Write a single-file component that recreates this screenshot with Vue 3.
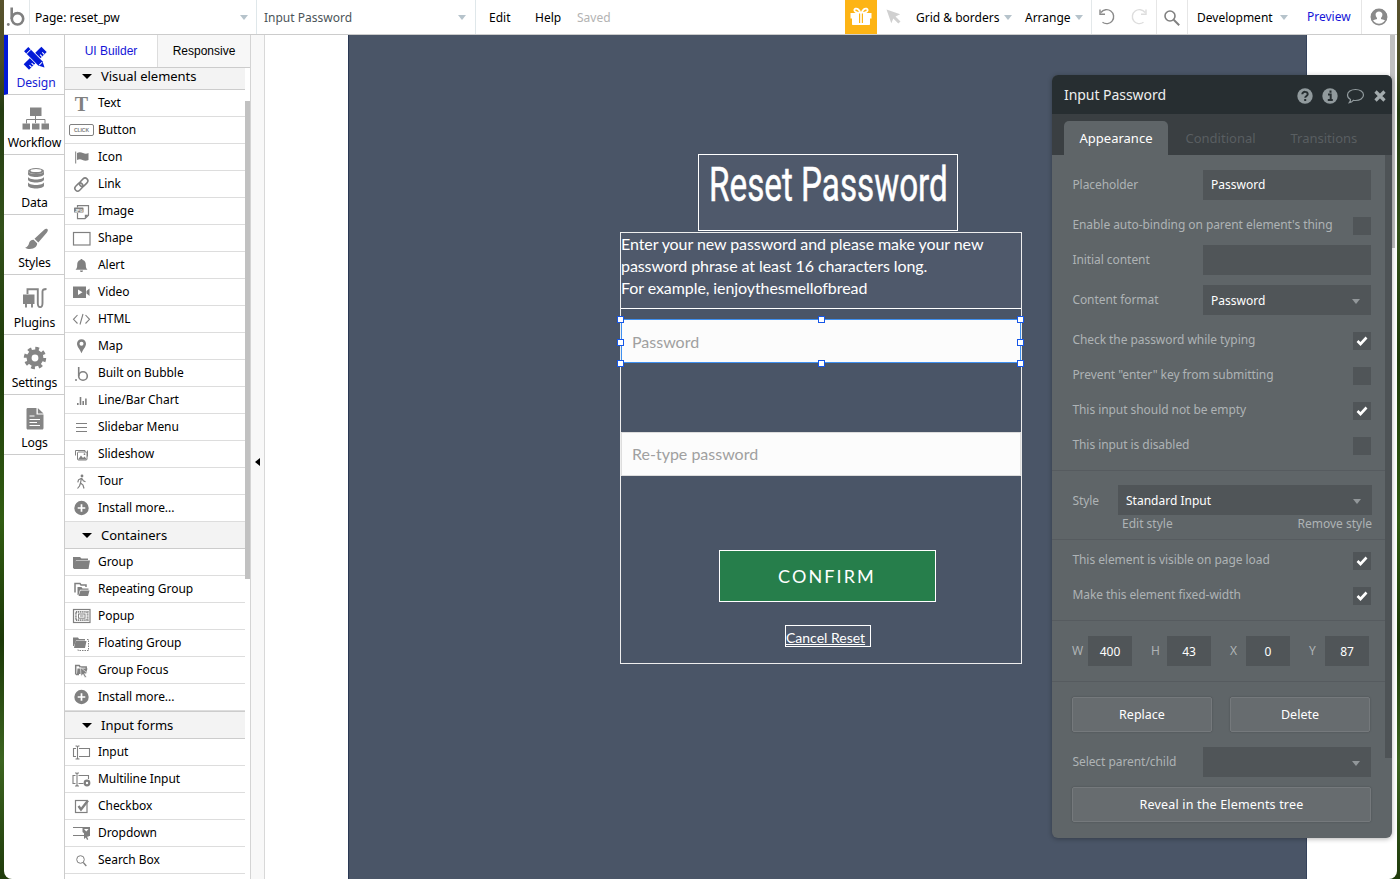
<script setup>
import { ref } from 'vue'

const navItems = [
    { label: 'Design', icon: 'design' },
    { label: 'Workflow', icon: 'workflow' },
    { label: 'Data', icon: 'data' },
    { label: 'Styles', icon: 'styles' },
    { label: 'Plugins', icon: 'plugins' },
    { label: 'Settings', icon: 'settings' },
    { label: 'Logs', icon: 'logs' }
]
const activeNav = ref('Design')

const navIcons = {
    design: '<g transform="rotate(45 15 15)"><path d="M11.500 2.500h7.500v25h-7.500z"/><path d="M19 6h-2.800M19 9h-2.800M19 21h-2.800M19 24h-2.800" stroke="#fff" stroke-width="1.100"/></g><g transform="rotate(-45 15 15)"><path d="M12 2.500h6v20L15 28.500l-3-6z" stroke="#fff" stroke-width="1.600"/><path d="M12 2.500h6v20L15 28.500l-3-6z"/><path d="M12 6h6M13 23h4" stroke="#fff" stroke-width="1"/></g>',
    workflow: '<path d="M10 3.500h11.500V12H10zM2.500 19.500h7.500v6H2.500zM12 19.500h7.500v6H12zM21.500 19.500H29v6h-7.500z"/><path d="M15.500 12v7M6.500 19.500v-4h18.500v4" fill="none" stroke="currentColor" stroke-width="1"/>',
    data: '<ellipse cx="16" cy="7" rx="8" ry="3"/><ellipse cx="16" cy="6.600" rx="5.500" ry="1.500" fill="#fff"/><path d="M8 7v3c0 4 16 4 16 0V7c0 4-16 4-16 0zM8 12.500v3c0 4 16 4 16 0v-3c0 4-16 4-16 0zM8 18v3.500c0 4 16 4 16 0V18c0 4-16 4-16 0z"/>',
    styles: '<path d="M27.500 5.300c-1-.9-2.300-.4-3.600.6l-9.400 8.900 3.800 3.800 8.400-9.800c1-1.200 1.600-2.700.8-3.500zM13.600 15.700c-2.300-.1-4 1.300-4.500 3.400-.4 1.900-1.400 4-4 4.600 2.600 1.900 8 1.700 10.500-.7 1.300-1.300 1.600-2.500 1.500-3.700z"/>',
    plugins: '<path d="M3 10.500h11.500v9.500H3z"/><path d="M6 20v3.500M12 20v3.500M7.500 10V5.200h10.300V19c0 5.500 4.700 5.500 4.700 0V7.500c0-1.700.8-2.500 4-2.500" fill="none" stroke="currentColor" stroke-width="1.900"/>',
    settings: '<circle cx="15" cy="14" r="5.900" fill="none" stroke="currentColor" stroke-width="5"/><circle cx="15" cy="14" r="9.500" fill="none" stroke="currentColor" stroke-width="3.400" stroke-dasharray="3.730 3.730"/>',
    logs: '<path d="M8 4h8.500v6.500h7V24c0 .8-.5 1.500-1.300 1.500H7.800c-.8 0-1.300-.7-1.300-1.500V5.300C6.500 4.500 7.200 4 8 4z"/><path d="M17.800 4l5.700 5.400h-5.700z"/><path d="M9.500 12h5M9.500 15.500H20M9.500 18.500H17M9.500 21.500H20" stroke="#fff" stroke-width="1.200"/>'
}

const sections = [
    {
        title: 'Visual elements',
        items: [
            ['Text', 'text'], ['Button', 'button'], ['Icon', 'flag'], ['Link', 'link'], ['Image', 'image'],
            ['Shape', 'shape'], ['Alert', 'bell'], ['Video', 'video'], ['HTML', 'html'], ['Map', 'map'],
            ['Built on Bubble', 'bubble'], ['Line/Bar Chart', 'chart'], ['Slidebar Menu', 'menu'],
            ['Slideshow', 'slideshow'], ['Tour', 'tour'], ['Install more...', 'plus']
        ]
    },
    {
        title: 'Containers',
        items: [
            ['Group', 'folder'], ['Repeating Group', 'folders'], ['Popup', 'popup'],
            ['Floating Group', 'floating'], ['Group Focus', 'focus'], ['Install more...', 'plus']
        ]
    },
    {
        title: 'Input forms',
        items: [
            ['Input', 'input'], ['Multiline Input', 'multiline'], ['Checkbox', 'checkbox'],
            ['Dropdown', 'dropdown'], ['Search Box', 'search']
        ]
    }
]

const line = 'fill="none" stroke="currentColor"'
const icons = {
    text: '<text x="13.300" y="18.500" text-anchor="middle" font-family="Liberation Serif, serif" font-weight="bold" font-size="20">T</text>',
    button: `<rect x="1.500" y="5.500" width="24" height="11" rx="1.500" ${line}/><text x="13.500" y="12.800" text-anchor="middle" font-family="Liberation Sans, sans-serif" font-weight="bold" font-size="5">CLICK</text>`,
    flag: `<path d="M7.700 5.500v12" ${line}/><path d="M9 7c2-1.200 4-1 6 0s4 .8 5.500 0v7c-2 1-4 1-6 0s-3.500-.8-5.500 0z"/>`,
    link: `<g transform="rotate(-45 13.500 11.700)" ${line} stroke-width="1.500"><rect x="5.500" y="8.700" width="9" height="5.600" rx="2.800"/><rect x="12" y="8.700" width="9.500" height="5.600" rx="2.800"/></g>`,
    image: `<path d="M9.500 7.500V5.700h11v9.500l-3.500 3.500H9.500V13" ${line} stroke-width="1.200"/><path d="M16.800 18.500v-3.700h3.700z"/><rect x="6" y="7.500" width="9.500" height="5" rx=".6"/><text x="10.800" y="11.600" text-anchor="middle" font-family="Liberation Sans, sans-serif" font-weight="bold" font-size="4" fill="#fff">JPG</text>`,
    shape: `<rect x="5.500" y="5.500" width="16.500" height="12.500" ${line} stroke-width="1.200"/>`,
    bell: '<path d="M13.500 5c.8 0 1.100.5 1.100 1.100 2.300.5 3.200 2.300 3.200 4.600 0 3 .6 3.900 1.700 5H7.500c1.100-1.100 1.700-2 1.700-5 0-2.300.9-4.100 3.200-4.600 0-.6.300-1.100 1.100-1.100zM12 16.500h3c0 2-3 2-3 0z"/>',
    video: '<rect x="5" y="5.500" width="13" height="11.500"/><path d="M18.500 10l3-2.500v7.500l-3-2.500z"/><path d="M10 8.500l4.500 2.700L10 14z" fill="#fff"/>',
    html: `<path d="M9.500 7l-4 4.300 4 4.200M17.500 7l4 4.300-4 4.200M15 6l-3 10.500" ${line} stroke-width="1.100"/>`,
    map: '<path fill-rule="evenodd" d="M13.500 4.200c2.600 0 4.500 2 4.500 4.500 0 3-2.600 5-4.500 9.600C11.600 13.700 9 11.700 9 8.700c0-2.500 1.900-4.500 4.500-4.500zm0 2.600a2 2 0 100 4 2 2 0 000-4z"/>',
    bubble: `<circle cx="15" cy="14" r="4.300" ${line} stroke-width="1.600"/><path d="M10.700 5v9" ${line} stroke-width="1.600"/><circle cx="8" cy="18" r="1"/>`,
    chart: '<path d="M9 14h1.600v2H9zM11.700 8h1.600v8h-1.600zM14.400 12H16v4h-1.600zM17.100 9.500h1.600V16h-1.600z"/>',
    menu: `<path d="M8 7.500h11M8 11.500h11M8 15.500h11" ${line} stroke-width="1"/>`,
    slideshow: `<path d="M7.500 12.500v-5h9.500v1.500M19.500 7.500v6" ${line}/><rect x="9.500" y="9" width="9.500" height="8" rx="1" ${line}/><path d="M10 16.500l3-4 2 2.500 1.500-1.500 2.500 3z"/><circle cx="16.500" cy="11.200" r=".9"/>`,
    tour: `<circle cx="14" cy="6" r="1.400"/><path d="M13.500 8l-1 5 2.500 2 1 3.500M12.500 13l-1 3-2 2.500M13.500 8.300l-3 1.500-.7 2.500M14 8.500l1.300 2.300 2.200 1" ${line} stroke-width="1.200"/>`,
    plus: '<circle cx="13.500" cy="11" r="7.200"/><path d="M13.500 7.200v7.600M9.700 11h7.600" stroke="#fff" stroke-width="1.700"/>',
    folder: '<path d="M5 6h7l1.500 1.500H20V9H8L6.500 17H5z"/><path d="M7.500 9.500H22L20.500 18H5.500z"/>',
    folders: `<path d="M7 14.500V5.500h5l1 1.500h5v2" ${line} stroke-width="1.500"/><path d="M9.500 9h4l1 1.500h6v1.300H12L10.500 17h-1zM12.500 12.500h9L20 18h-9.500z"/>`,
    popup: `<rect x="5.500" y="4.500" width="16.500" height="13" ${line} stroke-width="1.200"/><rect x="7.900" y="6.900" width="11.700" height="8.200" ${line} stroke-width="1.900" stroke-dasharray="1.200 .7"/><rect x="10.500" y="9" width="6.500" height="4.200" ${line}/><path d="M12 11h3.500" ${line}/>`,
    floating: `<path d="M5 5.500h5l1 1.500h6v1.500H8L6 14H5z"/><path d="M7.500 9h11l-1.500 7H6z"/><path d="M19 7.500h1.500v11H10V17" ${line} stroke-dasharray="1.500 1"/>`,
    focus: `<path d="M7.700 15.500v-9h3.500l1 1.500h6v2M8 15.500h3" ${line} stroke-width="1.500"/><path d="M9.500 9.500h10L18 15H9z"/><path d="M12.500 8.500l7 5.500-3 .5 2 3.500-1.500.8-2-3.500-2 2z" stroke="#fff" stroke-width=".6"/>`,
    input: `<path d="M8 7.500H5.500v8H8M11 7.500h10.500v8H11M7.500 5h1.200l.8.700.8-.7h1.200M7.500 18h1.200l.8-.7.8.7h1.200M9.500 6v11" ${line} stroke-width="1.100"/>`,
    multiline: `<path d="M7.500 7.500H5v8h2.500M10.500 7.500h10V11M10.500 15.500h5M7 5h1.200l.8.700.8-.7H11M7 18h1.200l.8-.7.8.7H11M9 6v11" ${line} stroke-width="1.100"/><circle cx="19" cy="15" r="2.300" ${line} stroke-width="2.200"/>`,
    checkbox: `<rect x="7.500" y="5.500" width="11.500" height="12" ${line} stroke-width="1.200"/><path d="M10.500 11l2.500 3.500L20 5.500" ${line} stroke-width="2.400"/>`,
    dropdown: `<path d="M5 5.500h10M5 13.500h11" ${line} stroke-width="1.200"/><path d="M14.500 5H22v9h-3l-4.500-4z"/><path d="M16 7h4.500l-2.200 2.500z" fill="#fff"/><path d="M16 10.500l5 4-2 .3 1.300 2.500-1.200.7-1.300-2.600-1.800 1.500z"/>`,
    search: `<circle cx="12.500" cy="10.500" r="3.800" ${line} stroke-width="1"/><path d="M15.300 13.500l3 3.500" ${line} stroke-width="1.300"/>`
}

const generalChecks = ref([
    { label: 'Check the password while typing', on: true },
    { label: 'Prevent "enter" key from submitting', on: false },
    { label: 'This input should not be empty', on: true },
    { label: 'This input is disabled', on: false }
])
const layoutChecks = ref([
    { label: 'This element is visible on page load', on: true },
    { label: 'Make this element fixed-width', on: true }
])
const autoBinding = ref(false)

const dims = [
    { label: 'W', value: 400 },
    { label: 'H', value: 43 },
    { label: 'X', value: 0 },
    { label: 'Y', value: 87 }
]

const handles = ['nw', 'n', 'ne', 'e', 'se', 's', 'sw', 'w']
</script>

<template>
    <div class="desktop">
        <div class="window">
            <header class="topbar">
                <div class="logo">
                    <svg width="24" height="34" viewBox="0 0 24 34">
                        <circle cx="13.500" cy="18.800" r="5.700" fill="none" stroke="#808080" stroke-width="2.600" />
                        <path d="M7.700 7.500v11.500" stroke="#808080" stroke-width="2.600" />
                        <circle cx="4.300" cy="24.500" r="1.400" fill="#808080" />
                    </svg>
                </div>
                <div class="select page-select"><span>Page: reset_pw</span><i class="caret"></i></div>
                <div class="select element-select"><span>Input Password</span><i class="caret"></i></div>
                <div class="menus">
                    <span class="edit">Edit</span>
                    <span class="help">Help</span>
                    <span class="saved">Saved</span>
                </div>
                <div class="gift">
                    <svg width="32" height="34" viewBox="0 0 32 34">
                        <path fill="#fff" d="M5.500 13h21v5.500h-21zM7 18h18v6c0 .6-.4 1-1 1H8c-.6 0-1-.4-1-1z" />
                        <path fill="none" stroke="#fff" stroke-width="1.800" d="M15.500 13c-1-3-3-5-5-4.300-2.500 1-1 4.300 5 4.300zM16.500 13c1-3 3-5 5-4.300 2.500 1 1 4.300-5 4.300z" />
                        <path fill="#fdb415" d="M14 13.500h1.200V23H14zM16.800 13.500H18V23h-1.200z" />
                    </svg>
                </div>
                <svg class="pointer" width="16" height="16" viewBox="0 0 16 16"><path fill="#d0d0d0" d="M.5.5l13.700 4.700-4.700 2.200 5 5-2.200 2.200-5-5-2 4.700z" /></svg>
                <div class="drop grid-drop"><span>Grid &amp; borders</span><i class="caret"></i></div>
                <div class="drop arrange-drop"><span>Arrange</span><i class="caret"></i></div>
                <div class="history">
                    <svg width="18" height="18" viewBox="0 0 18 18"><path d="M3 4.500A7 7 0 1 1 4.500 14.300M2 1.500v4.700h5" fill="none" stroke="#8a8a8a" stroke-width="1.400" /></svg>
                    <svg width="18" height="18" viewBox="0 0 18 18"><path d="M15 4.500A7 7 0 1 0 13.500 14.300M16 1.500v4.700h-5" fill="none" stroke="#ddd" stroke-width="1.400" /></svg>
                </div>
                <div class="search">
                    <svg width="18" height="18" viewBox="0 0 18 18"><circle cx="7" cy="7" r="5" fill="none" stroke="#808080" stroke-width="1.600" /><path d="M10.700 10.700l5.500 5.500" stroke="#808080" stroke-width="2" /></svg>
                </div>
                <div class="drop version"><span>Development</span><i class="caret"></i></div>
                <a class="preview">Preview</a>
                <div class="user">
                    <svg width="18" height="18" viewBox="0 0 18 18"><circle cx="9" cy="9" r="7.600" fill="#fff" stroke="#8a8a8a" stroke-width="1.600" /><path fill="#8a8a8a" d="M9 1a8 8 0 0 0-7 12c1-1 2.500-1.300 4.500-1.800.7-.3.700-1.100.2-1.700C4.500 6.700 5.800 3.600 9 3.600s4.500 3.100 2.300 5.900c-.5.600-.5 1.400.2 1.700 2 .5 3.500.8 4.500 1.800A8 8 0 0 0 9 1z" /></svg>
                </div>
            </header>

            <div class="workspace">
                <nav class="sidebar">
                    <div
                        v-for="item in navItems"
                        :key="item.label"
                        class="nav-item"
                        :class="{ active: item.label === activeNav }"
                        @click="activeNav = item.label"
                    >
                        <svg width="30" height="30" viewBox="0 0 30 30" fill="currentColor" v-html="navIcons[item.icon]"></svg>
                        <span>{{ item.label }}</span>
                    </div>
                </nav>

                <aside class="palette">
                    <div class="palette-tabs">
                        <span class="current">UI Builder</span>
                        <span>Responsive</span>
                    </div>
                    <div class="palette-body">
                        <div class="palette-list">
                            <div v-for="section in sections" :key="section.title" class="section">
                                <div class="section-title"><i></i>{{ section.title }}</div>
                                <div v-for="[label, icon] in section.items" :key="label" class="element">
                                    <svg width="26" height="22" viewBox="0 0 26 22" fill="currentColor" v-html="icons[icon]"></svg>
                                    <span>{{ label }}</span>
                                </div>
                            </div>
                        </div>
                        <div class="scroll-track"><div class="scroll-thumb"></div></div>
                    </div>
                </aside>

                <div class="collapse"><i></i></div>

                <main class="canvas">
                    <div class="page">
                        <h1 class="title"><span>Reset Password</span></h1>
                        <div class="group">
                            <p class="intro">
                                Enter your new password and please make your new<br />
                                password phrase at least 16 characters long.<br />
                                For example, ienjoythesmellofbread
                            </p>
                            <div class="field selected">
                                Password
                                <i v-for="h in handles" :key="h" class="handle" :class="h"></i>
                            </div>
                            <div class="field retype">Re-type password</div>
                            <div class="confirm">CONFIRM</div>
                            <a class="cancel">Cancel Reset</a>
                        </div>
                    </div>
                    <div class="canvas-thumb"></div>
                </main>
            </div>

            <section class="panel">
                <div class="panel-head">
                    <h2>Input Password</h2>
                    <svg width="90" height="18" viewBox="0 0 90 18">
                        <g fill="#919a9d">
                            <circle cx="9" cy="9" r="7.700" />
                            <circle cx="34" cy="9" r="7.700" />
                        </g>
                        <path d="M6.300 7.200c0-3.200 5.400-3 5.400 0 0 1.800-2.500 1.700-2.500 3.600M9.200 11.900v2" fill="none" stroke="#272e31" stroke-width="2" />
                        <path d="M34.500 3.500v2.300M32 7.500h2.700v5.200M31.800 13h5" fill="none" stroke="#272e31" stroke-width="2" />
                        <path d="M59.500 2.500c4.500 0 8 2.400 8 5.500s-3.500 5.500-8 5.500c-.8 0-1.500 0-2.200-.2-1 1.300-2.300 2.200-4 2.400.8-.9 1.200-2 1.200-3.200-1.900-1-3-2.600-3-4.500 0-3.100 3.500-5.500 8-5.500z" fill="none" stroke="#919a9d" stroke-width="1.200" />
                        <path d="M79.500 4.500l9 9M88.500 4.500l-9 9" stroke="#a3abad" stroke-width="3.200" />
                    </svg>
                </div>
                <div class="panel-tabs">
                    <span class="current">Appearance</span>
                    <span class="conditional">Conditional</span>
                    <span class="transitions">Transitions</span>
                </div>
                <div class="panel-main">
                    <div class="panel-body">
                        <div class="block first">
                            <div class="row"><label>Placeholder</label><div class="box wide">Password</div></div>
                            <div class="row check" @click="autoBinding = !autoBinding">
                                <label>Enable auto-binding on parent element's thing</label>
                                <div class="tick"><svg v-if="autoBinding" width="12" height="10" viewBox="0 0 12 10"><path d="M1.500 5l3 3L10.500 1.500" /></svg></div>
                            </div>
                            <div class="row"><label>Initial content</label><div class="box wide"></div></div>
                            <div class="row"><label>Content format</label><div class="box wide dropdown">Password<i class="caret"></i></div></div>
                            <div v-for="c in generalChecks" :key="c.label" class="row check" @click="c.on = !c.on">
                                <label>{{ c.label }}</label>
                                <div class="tick"><svg v-if="c.on" width="12" height="10" viewBox="0 0 12 10"><path d="M1.500 5l3 3L10.500 1.500" /></svg></div>
                            </div>
                        </div>
                        <div class="block style-block">
                            <div class="row"><label>Style</label><div class="box style-box dropdown">Standard Input<i class="caret"></i></div></div>
                            <div class="links"><a>Edit style</a><a>Remove style</a></div>
                        </div>
                        <div class="block layout-block">
                            <div v-for="c in layoutChecks" :key="c.label" class="row check" @click="c.on = !c.on">
                                <label>{{ c.label }}</label>
                                <div class="tick"><svg v-if="c.on" width="12" height="10" viewBox="0 0 12 10"><path d="M1.500 5l3 3L10.500 1.500" /></svg></div>
                            </div>
                        </div>
                        <div class="block dims">
                            <div v-for="d in dims" :key="d.label" class="dim"><label>{{ d.label }}</label><div class="box">{{ d.value }}</div></div>
                        </div>
                        <div class="block actions">
                            <div class="pair"><button>Replace</button><button>Delete</button></div>
                            <div class="row select-row"><label>Select parent/child</label><div class="box wide dropdown"><i class="caret"></i></div></div>
                            <button class="reveal">Reveal in the Elements tree</button>
                        </div>
                    </div>
                    <div class="panel-thumb"></div>
                </div>
            </section>
        </div>
    </div>
</template>

<style>
body {
    margin: 0;
    overflow: hidden;
}
</style>

<style scoped>
* {
    box-sizing: border-box;
}

.desktop {
    height: 879px;
    width: 1400px;
    padding: 0 3px 0 4px;
    background: linear-gradient(#59532d 0, #4b4d26 60px, #243c12 110px, #33511a 230px, #1e3a0a 360px, #315c12 520px, #1c3808 640px, #3c6420 760px, #1f3b0b 879px);
    font-family: 'Noto Sans', 'Open Sans', sans-serif;
    font-size: 12px;
    color: #000;
    overflow: hidden;
}

.window {
    position: relative;
    height: 879px;
    display: flex;
    flex-direction: column;
    background: #fff;
    border-radius: 0 0 8px 8px;
    overflow: hidden;
}

.topbar {
    height: 35px;
    flex: none;
    display: flex;
    align-items: center;
    border-bottom: 1px solid #ccc;
    white-space: nowrap;
}

.logo {
    width: 26px;
    height: 34px;
    border-right: 1px solid #e3e8ea;
}

.caret {
    border: 4px solid transparent;
    border-top: 5px solid #b6c3cb;
    border-bottom: 0;
}

.select {
    display: flex;
    align-items: center;
    justify-content: space-between;
    height: 34px;
    padding: 0 8px 0 5px;
    border-right: 1px solid #dfe7ea;
}

.page-select {
    width: 227px;
}

.element-select {
    width: 219px;
    padding: 1px 9px 0 7px;
    color: #4c5559;
}

.menus {
    display: flex;
    width: 369px;
    padding-left: 13px;
}

.edit {
    width: 46px;
}

.help {
    width: 42px;
}

.saved {
    color: #b3b3b3;
}

.gift {
    width: 32px;
    height: 34px;
    background: #fdb415;
}

.pointer {
    margin: 0 14px 0 9px;
}

.drop {
    display: flex;
    align-items: center;
    height: 34px;
    justify-content: space-between;
}

.grid-drop {
    width: 96px;
}

.arrange-drop {
    width: 67px;
    margin-left: 13px;
    padding-right: 8px;
    border-right: 1px solid #e3e8ea;
}

.history {
    display: flex;
    gap: 14px;
    align-items: center;
    width: 65px;
    height: 34px;
    padding-left: 6px;
    border-right: 1px solid #e6e6e6;
}

.search {
    display: flex;
    align-items: center;
    justify-content: center;
    width: 31px;
    height: 34px;
    border-right: 1px solid #e6e6e6;
}

.search svg {
    margin-top: 2px;
}

.version {
    width: 100px;
    padding-left: 9px;
}

.preview {
    margin-left: 19px;
    width: 55px;
    height: 34px;
    line-height: 33px;
    color: #1414d8;
    border-right: 1px solid #e6e6e6;
}

.user {
    display: flex;
    margin-left: 8px;
}

.workspace {
    flex: 1;
    min-height: 0;
    display: flex;
}

.sidebar {
    width: 61px;
    flex: none;
    border-right: 1px solid #ccc;
}

.nav-item {
    height: 60px;
    display: flex;
    flex-direction: column;
    align-items: center;
    padding: 9px 0 0 1px;
    border-bottom: 1px solid #ccc;
    color: #858585;
}

.nav-item span {
    font-size: 12.2px;
    line-height: 18px;
    letter-spacing: -0.1px;
    color: #000;
}

.nav-item.active {
    padding-left: 0;
    border-left: 4px solid #0219d8;
    color: #0219d8;
}

.nav-item.active svg {
    margin: -1px 2px 1px 0;
}

.nav-item.active span {
    color: #1722d4;
}

.palette {
    width: 186px;
    flex: none;
    display: flex;
    flex-direction: column;
    border-right: 1px solid #d4d4d4;
}

.palette-tabs {
    height: 33px;
    flex: none;
    display: flex;
    font-family: 'Liberation Sans', Arial, sans-serif;
    line-height: 32px;
    text-align: center;
    border-bottom: 1px solid #ccc;
}

.palette-tabs span {
    width: 92px;
    background: #f7f7f7;
}

.palette-tabs .current {
    width: 93px;
    color: #1414d8;
    background: #fff;
    border-right: 1px solid #ddd;
}

.palette-body {
    flex: 1;
    min-height: 0;
    display: flex;
}

.palette-list {
    width: 180px;
    overflow: hidden;
}

.section-title {
    display: flex;
    align-items: center;
    height: 27px;
    padding-left: 17px;
    font-size: 13px;
    letter-spacing: -0.03px;
    background: #f3f3f3;
    border-bottom: 1px solid #ccc;
}

.section:first-child .section-title {
    height: 22px;
    padding-bottom: 5px;
}

.section:last-child .section-title {
    height: 28px;
    border-top: 1px solid #ccc;
}

.section-title i {
    margin-right: 9px;
    border: 5px solid transparent;
    border-top: 5px solid #000;
    border-bottom: 0;
}

.element {
    display: flex;
    align-items: center;
    height: 27px;
    padding-left: 3px;
    border-bottom: 1px solid #ddd;
    white-space: nowrap;
    letter-spacing: -0.06px;
}

.element span {
    margin-top: -1px;
}

.section:first-child .element span {
    margin-top: -2px;
}

.element svg {
    flex: none;
    margin-right: 4px;
    color: #808080;
}

.scroll-track {
    width: 5px;
    padding-top: 33px;
}

.scroll-thumb {
    height: 478px;
    background: #c1c1c1;
}

.collapse {
    width: 14px;
    flex: none;
    display: flex;
    align-items: center;
    padding: 9px 0 0 4px;
    background: #f8f8f8;
    border-right: 1px solid #d8d8d8;
}

.collapse i {
    border: 4.5px solid transparent;
    border-right: 5px solid #000;
    border-left: 0;
}

.canvas {
    flex: 1;
    display: flex;
    justify-content: space-between;
    padding: 0 2px 0 83px;
}

.page {
    width: 959px;
    padding: 119px 0 0 271px;
    background: #4a5567;
    border-left: 1px solid #2a3853;
    border-right: 1px solid #35435c;
    color: #fff;
}

.canvas-thumb {
    width: 5px;
    height: 213px;
    background: #c1c1c1;
}

.title {
    display: flex;
    justify-content: center;
    width: 260px;
    height: 77px;
    margin: 0 0 1px 78px;
    padding-top: 1px;
    font-family: Roboto, sans-serif;
    font-size: 48px;
    font-weight: 400;
    line-height: 58px;
    white-space: nowrap;
    background: #4f596b;
    border: 1px solid #fff;
}

.title span {
    -webkit-text-stroke: 0.5px #fff;
    transform: scaleX(0.692);
}

.group {
    display: flex;
    flex-direction: column;
    width: 402px;
    height: 432px;
    border: 1px solid #eee;
    font-family: Lato, sans-serif;
}

.intro {
    height: 76px;
    flex: none;
    margin: 0;
    font-size: 16px;
    line-height: 22px;
    letter-spacing: -0.08px;
    white-space: nowrap;
    background: #4f596b;
    border-bottom: 1px solid #fff;
}

.field {
    flex: none;
    height: 44px;
    padding-left: 10px;
    font-size: 16px;
    line-height: 42px;
    color: #a0a0a0;
    background: #fcfcfc;
    border: 1px solid #ddd;
}

.selected {
    position: relative;
    margin-top: 10px;
    line-height: 43px;
    border: 1px solid #3f90f0;
}

.handle {
    position: absolute;
    width: 7px;
    height: 7px;
    background: #fff;
    border: 1px solid #1657e8;
}

.nw, .n, .ne {
    top: -4px;
}

.sw, .s, .se {
    bottom: -5px;
}

.nw, .w, .sw {
    left: -5px;
}

.ne, .e, .se {
    right: -4px;
}

.n, .s {
    left: 196px;
}

.e, .w {
    top: 19px;
}

.retype {
    margin-top: 69px;
}

.confirm {
    flex: none;
    width: 217px;
    height: 52px;
    margin: 74px 0 0 98px;
    padding-right: 1px;
    font-size: 18px;
    line-height: 51px;
    text-align: center;
    letter-spacing: 2.1px;
    background: #267e4b;
    border: 1px solid #fff;
}

.cancel {
    width: 86px;
    height: 22px;
    margin: 23px 0 0 164px;
    font-size: 14px;
    line-height: 23px;
    text-decoration: underline;
    background: #4f596b;
    border: 1px solid #fff;
    white-space: nowrap;
}

.panel {
    position: absolute;
    left: 1048px;
    top: 75px;
    width: 340px;
    height: 763px;
    display: flex;
    flex-direction: column;
    background: #5f6568;
    border-radius: 6px;
    box-shadow: 0 1px 5px rgba(0, 0, 0, 0.3);
    overflow: hidden;
    white-space: nowrap;
}

.panel-head {
    height: 39px;
    flex: none;
    display: flex;
    align-items: center;
    justify-content: space-between;
    padding: 0 3px 0 12px;
    background: #272e31;
}

.panel-head h2 {
    margin: 0;
    font-size: 14px;
    font-weight: 400;
    letter-spacing: -0.05px;
    color: #eee;
}

.panel-head svg {
    margin: 3px 3px 0 0;
    flex: none;
}

.panel-tabs {
    height: 41px;
    flex: none;
    display: flex;
    padding: 7px 0 0 12px;
    font-size: 13px;
    line-height: 34px;
    background: #3a3f42;
    color: #595e61;
}

.panel-tabs .current {
    width: 104px;
    text-align: center;
    color: #fff;
    background: #5f6568;
    border-radius: 5px 5px 0 0;
}

.conditional {
    width: 105px;
    margin-left: 17.5px;
}

.panel-main {
    flex: 1;
    display: flex;
}

.panel-body {
    width: 333px;
    color: #aeb3b5;
}

.panel-thumb {
    width: 7px;
    height: 603px;
    background: #4e5356;
}

.block {
    padding: 0 14px 0 20px;
    border-top: 1px solid #565b5f;
}

.first {
    height: 315px;
    padding-top: 15px;
    border-top: 0;
}

.row {
    display: flex;
    align-items: center;
    justify-content: space-between;
    height: 30px;
    margin-bottom: 10px;
}

.row label {
    margin: -2px 0 0 0.4px;
    letter-spacing: -0.06px;
}

.check {
    height: 25px;
    padding-top: 7px;
}

.check label {
    margin-top: -4px;
}

.box {
    display: flex;
    align-items: center;
    justify-content: space-between;
    height: 30px;
    padding: 0 11px 2px 8px;
    color: #fff;
    background: #505558;
}

.wide {
    width: 168px;
}

.dropdown {
    padding-bottom: 0;
}

.box .caret {
    margin: 2px 0 0 auto;
    border-top-color: #92979a;
}

.tick {
    display: flex;
    align-items: center;
    justify-content: center;
    width: 18px;
    height: 18px;
    background: #505558;
}

.tick path {
    fill: none;
    stroke: #fff;
    stroke-width: 2.6;
}

.style-block {
    height: 69px;
    padding: 14px 13px 0 20px;
}

.style-block .row {
    margin: 0;
}

.style-block .row label {
    margin-top: 0;
}

.style-box {
    width: 254px;
}

.links {
    display: flex;
    justify-content: space-between;
    padding-left: 50px;
    line-height: 18px;
}

.layout-block {
    height: 81px;
    padding-top: 5px;
}

.dims {
    display: flex;
    justify-content: space-between;
    height: 61px;
    padding: 15px 16px 0 20px;
}

.dim {
    display: flex;
    justify-content: space-between;
    width: 60px;
    line-height: 30px;
}

.dim .box {
    width: 44px;
    padding: 1px 0 0;
    justify-content: center;
}

.actions {
    padding-top: 15px;
}

.pair {
    display: flex;
    gap: 18px;
}

button {
    width: 140px;
    height: 35px;
    padding: 0 0 1px;
    font: 12.5px 'Noto Sans', sans-serif;
    color: #fff;
    background: #676c6f;
    border: 1px solid #75797c;
    border-radius: 2px;
    box-shadow: 0 0 2px rgba(0, 0, 0, 0.25);
}

.select-row {
    margin-top: 15px;
}

.reveal {
    width: 299px;
    letter-spacing: 0.17px;
}
</style>
